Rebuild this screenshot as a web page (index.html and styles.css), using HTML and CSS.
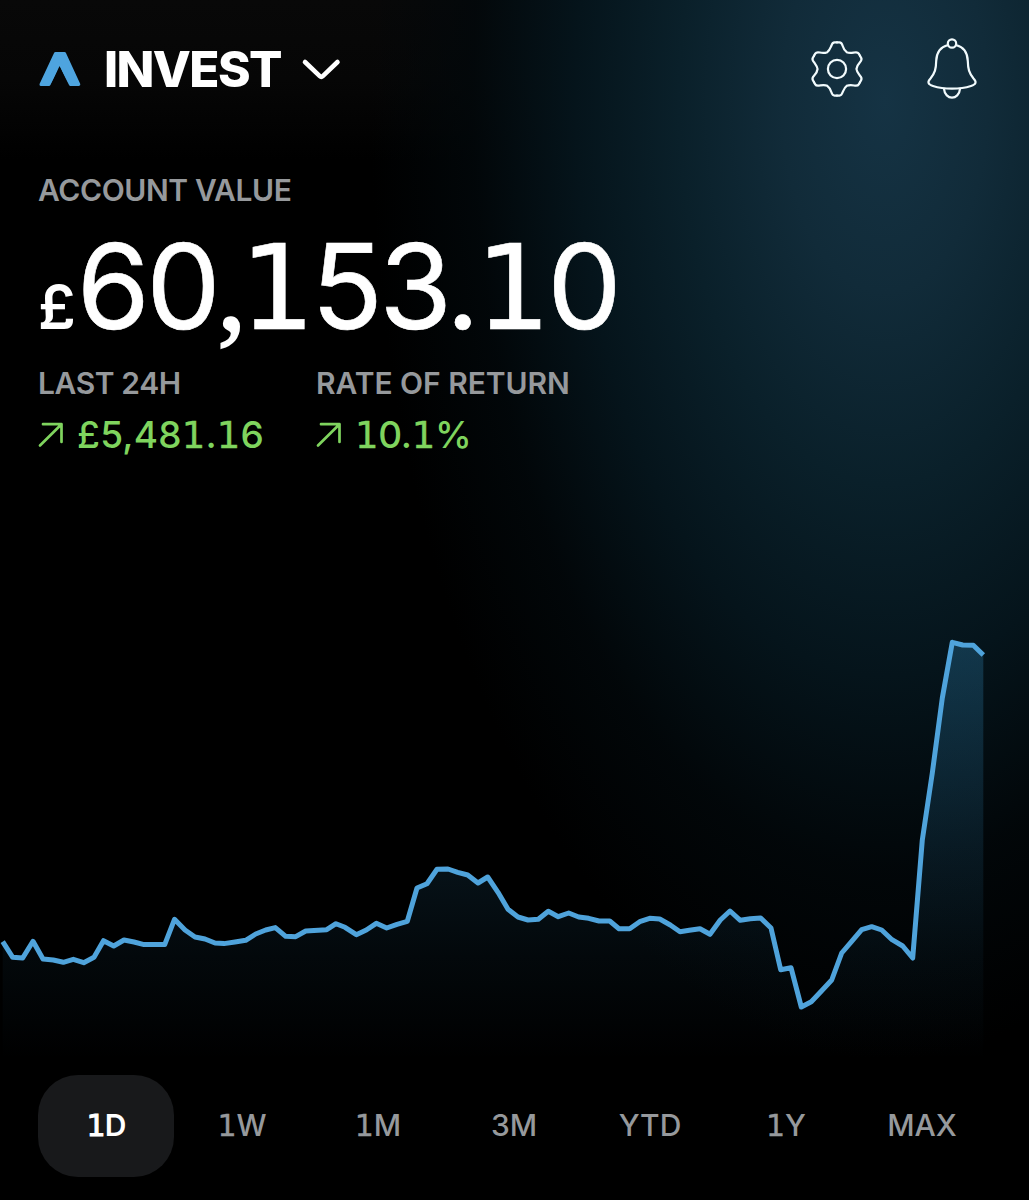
FILE: index.html
```html
<!DOCTYPE html>
<html lang="en">
<head>
<meta charset="utf-8">
<title>Invest</title>
<link rel="stylesheet" href="styles.css">
</head>
<body>
<main class="screen">
  <header class="topbar">
    <div class="brand">
      <svg class="logo" viewBox="0 0 42 36" width="42" height="36"><path d="M16.500 2.500H25.500L39.800 33.500H31.500L20.800 12.500L10 33.500H2Z" fill="#4ea4df" stroke="#4ea4df" stroke-width="3" stroke-linejoin="round"/><path d="M20.500 15L30 36H11Z" fill="#060606"/></svg>
      <h1 class="title">INVEST</h1>
      <svg class="chevron" viewBox="0 0 40 24" width="40" height="24"><path d="M4 5L18.800 19.100Q20.300 20.500 21.800 19.100L36.500 5" fill="none" stroke="#fff" stroke-width="4.600" stroke-linecap="round" stroke-linejoin="round"/></svg>
    </div>
    <div class="actions">
      <svg viewBox="-31 -31 62 62" width="60" height="60" fill="none" stroke="#f2fbfd" stroke-width="2.300" stroke-linecap="round">
        <defs><path id="tooth" d="M0-27.400H2.500C4.500-27.400 5.100-26.500 5.900-23.800C6.700-21 7.900-19 10.050-17.400C12.500-16.300 14.800-16.700 17.660-17.010C20.400-17.650 21.480-17.610 22.480-15.870L23.730-13.700"/></defs>
        <use href="#tooth"/><use href="#tooth" transform="rotate(60)"/><use href="#tooth" transform="rotate(120)"/><use href="#tooth" transform="rotate(180)"/><use href="#tooth" transform="rotate(240)"/><use href="#tooth" transform="rotate(300)"/>
        <circle r="9.400"/>
      </svg>
      <svg viewBox="-30 -30 60 60" width="60" height="60" fill="none" stroke="#f2fbfd" stroke-width="2.200" stroke-linecap="round" stroke-linejoin="round">
        <circle cy="-25.500" r="4.200"/>
        <path d="M-4-24C-12-22-15.500-16-15.800-8C-16 0-17 4-21.500 9.500C-25 13-24 15.500-19 17C-8 20.500 8 20.500 19 17C24 15.500 25 13 21.500 9.500C17 4 16 0 15.800-8C15.500-16 12-22 4-24"/>
        <path d="M-8 19.800C-7 31.500 7 31.500 8 19.800"/>
      </svg>
    </div>
  </header>

  <section class="account">
    <p class="label label-account">ACCOUNT VALUE</p>
    <p class="balance"><span class="currency">£</span>60<span class="comma">,</span><span class="one">1</span>53.<span class="one">1</span>0</p>
    <div class="stats">
      <div class="stat">
        <p class="label">LAST 24H</p>
        <p class="gain"><svg class="arrow" viewBox="0 0 26 26" width="26" height="26"><path d="M2 23.500L23.500 2.200M5 2.200H23.500V20" fill="none" stroke="#7fd45e" stroke-width="2.700" stroke-linecap="round" stroke-linejoin="round"/></svg><span>£5,48<span class="one">1</span>.<span class="one">1</span>6</span></p>
      </div>
      <div class="stat">
        <p class="label label-rate">RATE OF RETURN</p>
        <p class="gain"><svg class="arrow" viewBox="0 0 26 26" width="26" height="26"><path d="M2 23.500L23.500 2.200M5 2.200H23.500V20" fill="none" stroke="#7fd45e" stroke-width="2.700" stroke-linecap="round" stroke-linejoin="round"/></svg><span class="percent"><span class="one">1</span>0.<span class="one">1</span>%</span></p>
      </div>
    </div>
  </section>

  <svg class="chart" viewBox="0 480 1029 595" width="1029" height="595">
    <defs>
      <linearGradient id="area" gradientUnits="userSpaceOnUse" x1="0" y1="642" x2="0" y2="1060">
        <stop offset="0" stop-color="#3595cc" stop-opacity=".27"/>
        <stop offset=".5" stop-color="#3595cc" stop-opacity=".13"/>
        <stop offset=".75" stop-color="#3595cc" stop-opacity=".055"/>
        <stop offset="1" stop-color="#3595cc" stop-opacity="0"/>
      </linearGradient>
    </defs>
    <path fill="url(#area)" d="M2.700 941.700L12.700 957.300L22.700 958L33 941.300L43 959L53.300 960L63.300 962.300L73.300 959.300L83.700 962.700L94 957.300L103.500 940.700L113.700 946L124 940L134 942L144 944.600L164.700 944.600L174.500 919.300L185 930L195 937L205 939L215 943L224 943.600L235 942L245.700 940.300L255.700 934L265.700 930L275.300 927.600L285.700 936.300L295.700 936.700L305.700 931L326.700 929.700L336 923.700L345 927.300L356.300 934.700L366.300 930L376.300 923.300L386.700 928L397 924.300L407.300 921.300L417 888L427 883.700L437 869.300L448 869L457.700 872.300L467.700 875L478 883L487.700 877L498 892.300L508 909.300L518 917L528 920L538.300 919.300L548.300 911.300L558.300 916.700L568.700 913L578.700 917L588.700 918.300L599 921L609.700 921L619 928.700L629.700 928.700L639.700 921.700L649.700 918.300L659.700 919L670.300 925L680 931.700L689.300 930.300L700 928.700L710 934.300L720.300 920L730 911L740.300 920.300L750.300 918.700L760.700 918L771 928L780.700 969.700L791 967.700L801.300 1007L811.300 1001.700L821.700 990.700L831.700 980L841.700 953L851.700 941.300L861.700 929.700L871.700 926.700L881.700 930L892 939.700L902.700 946L912.700 958L922.300 840L932.300 773L942.300 698L952.300 642.300L962.700 645L973.300 645.300L983.300 655V1060H2.700Z"/>
    <path class="line" d="M2.700 941.700L12.700 957.300L22.700 958L33 941.300L43 959L53.300 960L63.300 962.300L73.300 959.300L83.700 962.700L94 957.300L103.500 940.700L113.700 946L124 940L134 942L144 944.600L164.700 944.600L174.500 919.300L185 930L195 937L205 939L215 943L224 943.600L235 942L245.700 940.300L255.700 934L265.700 930L275.300 927.600L285.700 936.300L295.700 936.700L305.700 931L326.700 929.700L336 923.700L345 927.300L356.300 934.700L366.300 930L376.300 923.300L386.700 928L397 924.300L407.300 921.300L417 888L427 883.700L437 869.300L448 869L457.700 872.300L467.700 875L478 883L487.700 877L498 892.300L508 909.300L518 917L528 920L538.300 919.300L548.300 911.300L558.300 916.700L568.700 913L578.700 917L588.700 918.300L599 921L609.700 921L619 928.700L629.700 928.700L639.700 921.700L649.700 918.300L659.700 919L670.300 925L680 931.700L689.300 930.300L700 928.700L710 934.300L720.300 920L730 911L740.300 920.300L750.300 918.700L760.700 918L771 928L780.700 969.700L791 967.700L801.300 1007L811.300 1001.700L821.700 990.700L831.700 980L841.700 953L851.700 941.300L861.700 929.700L871.700 926.700L881.700 930L892 939.700L902.700 946L912.700 958L922.300 840L932.300 773L942.300 698L952.300 642.300L962.700 645L973.300 645.300L983.300 655"/>
  </svg>

  <nav class="ranges">
    <button class="range active"><span class="one">1</span>D</button>
    <button class="range"><span class="one">1</span>W</button>
    <button class="range"><span class="one">1</span>M</button>
    <button class="range">3M</button>
    <button class="range">YTD</button>
    <button class="range"><span class="one">1</span>Y</button>
    <button class="range">MAX</button>
  </nav>
</main>
</body>
</html>
```
FILE: styles.css
```css
* { box-sizing: border-box; }

body {
  margin: 0;
  background: #000;
  color: #fff;
  font-family: Inter, "Liberation Sans", sans-serif;
}

h1, p { margin: 0; }
svg { display: block; flex: none; overflow: visible; }

.screen {
  display: flex;
  flex-direction: column;
  width: 1029px;
  height: 1200px;
  overflow: hidden;
  background:
    radial-gradient(ellipse 515px 960px at 885px 100px,
      #153344 0%, #112b39 20%, #0a202a 40%, #05141b 60%, rgba(2, 8, 11, .8) 80%, rgba(0, 0, 0, 0) 100%),
    linear-gradient(#080808 0, #060606 80px, #000 160px);
}

.topbar {
  display: flex;
  justify-content: space-between;
  align-items: center;
  height: 138px;
  padding: 0 47px 0 39px;
}

.brand { display: flex; align-items: center; }
.title {
  margin-left: 23px;
  font-size: 49.5px;
  line-height: 60px;
  font-weight: 800;
  letter-spacing: -1.6px;
}
.chevron { margin-left: 20px; }
.actions { display: flex; gap: 55px; }

.account {
  height: 342px;
  padding: 32px 38px 0;
}
.label {
  color: #96999c;
  font-size: 30px;
  line-height: 40px;
  font-weight: 600;
  letter-spacing: -.4px;
}
.label-rate { letter-spacing: -.05px; }
.balance {
  margin-top: 16px;
  font-size: 118px;
  line-height: 120px;
  letter-spacing: -3.8px;
  white-space: nowrap;
  -webkit-text-stroke: .6px #fff;
}
.currency {
  margin-right: 1px;
  font-size: 60px;
  line-height: 0;
  font-weight: 600;
  letter-spacing: 0;
  -webkit-text-stroke: 0;
}
.comma {
  margin-right: -3px;
  font-family: "Liberation Serif", serif;
  font-size: 120px;
  line-height: 0;
  -webkit-text-stroke: 1.6px #fff;
}
.one {
  font-family: "DejaVu Sans", sans-serif;
  font-weight: 400;
  line-height: 0;
}

.stats { display: flex; margin-top: 17px; }
.stat { width: 278px; }
.stat .label { white-space: nowrap; }
.gain {
  display: flex;
  align-items: center;
  margin-top: 7px;
  gap: 13px;
  color: #7fd45e;
  font-size: 37px;
  line-height: 50px;
  font-weight: 500;
  letter-spacing: .2px;
  white-space: nowrap;
}
.percent { letter-spacing: -.3px; }
.gain .one, .range .one { -webkit-text-stroke: .4px currentColor; }

.chart { width: 1029px; height: 595px; }
.line { fill: none; stroke: #4fa3db; stroke-width: 5; stroke-linejoin: round; }

.ranges {
  display: grid;
  grid-template-columns: repeat(7, 136px);
  height: 102px;
  margin-left: 38px;
}
.range {
  padding: 0 0 2px;
  border: 0;
  border-radius: 40px;
  background: none;
  color: #96999c;
  font: 500 30px/40px Inter, "Liberation Sans", sans-serif;
}
.active { background: #18191b; color: #fff; font-weight: 600; letter-spacing: -.8px; }
.range.active .one { -webkit-text-stroke: 1px #fff; }
```
